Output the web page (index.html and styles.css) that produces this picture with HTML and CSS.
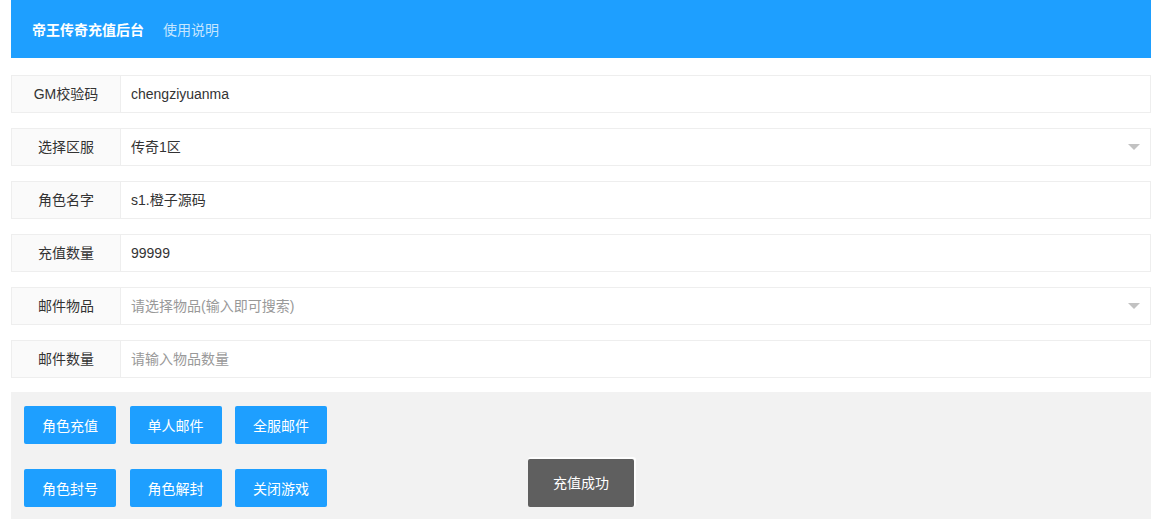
FILE: index.html
```html
<!DOCTYPE html>
<html lang="zh-CN">
<head>
    <meta charset="UTF-8">
    <meta name="viewport" content="width=device-width, initial-scale=1.0">
    <title>帝王传奇充值后台</title>
    <link rel="stylesheet" href="styles.css">
</head>
<body>
    <div class="header">
        <span class="logo">帝王传奇充值后台</span>
        <a class="nav-link" href="#">使用说明</a>
    </div>

    <form class="form">
        <div class="form-item">
            <label class="form-label">GM校验码</label>
            <div class="form-input">chengziyuanma</div>
        </div>
        <div class="form-item">
            <label class="form-label">选择区服</label>
            <div class="form-input select">传奇1区</div>
        </div>
        <div class="form-item">
            <label class="form-label">角色名字</label>
            <div class="form-input">s1.橙子源码</div>
        </div>
        <div class="form-item">
            <label class="form-label">充值数量</label>
            <div class="form-input">99999</div>
        </div>
        <div class="form-item">
            <label class="form-label">邮件物品</label>
            <div class="form-input select placeholder">请选择物品(输入即可搜索)</div>
        </div>
        <div class="form-item">
            <label class="form-label">邮件数量</label>
            <div class="form-input placeholder">请输入物品数量</div>
        </div>

        <div class="button-panel">
            <div class="button-row">
                <button type="button" class="btn">角色充值</button>
                <button type="button" class="btn">单人邮件</button>
                <button type="button" class="btn">全服邮件</button>
            </div>
            <div class="button-row">
                <button type="button" class="btn">角色封号</button>
                <button type="button" class="btn">角色解封</button>
                <button type="button" class="btn">关闭游戏</button>
            </div>
        </div>
    </form>

    <!-- layer.msg style toast -->
    <div class="toast">充值成功</div>
</body>
</html>
```

FILE: styles.css
```css
body {
    margin: 0;
    padding: 0 11px;
    font-family: 'Liberation Sans', 'Noto Sans CJK SC', sans-serif;
    font-size: 14px;
    color: #333;
    background-color: #fff;
}
.header {
    display: flex;
    align-items: center;
    height: 58px;
    padding: 0 21px;
    background-color: #1E9FFF;
}
.logo {
    color: #fff;
    font-weight: bold;
}
.nav-link {
    margin-left: 19px;
    color: rgba(255, 255, 255, 0.75);
    text-decoration: none;
}
.form {
    margin-top: 17px;
}
.form-item {
    display: flex;
    height: 38px;
    margin-bottom: 15px;
    border: 1px solid #eee;
    box-sizing: border-box;
}
.form-label {
    width: 108px;
    flex-shrink: 0;
    line-height: 36px;
    text-align: center;
    background-color: #FAFAFA;
    border-right: 1px solid #eee;
}
.form-input {
    position: relative;
    flex: 1;
    padding-left: 10px;
    line-height: 36px;
    color: #333;
}
.form-input.placeholder {
    color: #999;
}
.form-input.select::after {
    content: "";
    position: absolute;
    right: 10px;
    top: 15px;
    border-style: solid;
    border-width: 6px 6px 0;
    border-color: #c2c2c2 transparent transparent;
}
.button-panel {
    display: flex;
    flex-direction: column;
    gap: 25px;
    margin-top: -1px;
    padding: 14px 13px 12px;
    background-color: #f2f2f2;
}
.button-row {
    display: flex;
    gap: 13.5px;
}
.btn {
    height: 38px;
    padding: 0 18px;
    border: none;
    border-radius: 2px;
    background-color: #1E9FFF;
    color: #fff;
    font-family: 'Liberation Sans', 'Noto Sans CJK SC', sans-serif;
    font-size: 14px;
    cursor: pointer;
}
.toast {
    position: absolute;
    left: 528px;
    top: 459px;
    padding: 12px 25px;
    line-height: 24px;
    background-color: #5f5f5f;
    color: #fff;
    border-radius: 2px;
    box-shadow: 1px -1px 0 1px rgba(255, 255, 255, 0.9);
}
```
